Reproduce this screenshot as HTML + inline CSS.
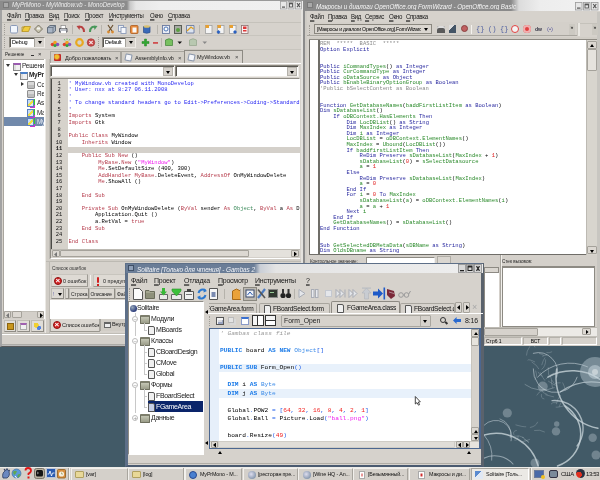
<!DOCTYPE html>
<html><head><meta charset="utf-8">
<style>
*{margin:0;padding:0;box-sizing:border-box}
html,body{width:600px;height:480px;overflow:hidden}
body{position:relative;will-change:transform;background:#425a67;font-family:"Liberation Sans",sans-serif;font-size:6px;color:#000}
.a{position:absolute}
.win{position:absolute;background:#d6d2cc}
.tt{position:absolute;font-style:italic;color:#f6f6f6;white-space:nowrap;transform:scaleY(1.2);transform-origin:0 50%}
.code{white-space:pre;font-family:"Liberation Mono",monospace;font-size:5.4px;line-height:6.6px}
.menu{position:absolute;white-space:nowrap;font-size:6px;color:#161616;letter-spacing:-0.25px}
.menu span{position:absolute;top:0;transform:scaleY(1.15);transform-origin:0 55%}
.btn3 i{position:absolute;top:0;width:7px;height:7px;background:#e4e4e4;border:1px solid #9a9a9a}
.btn3 i:nth-child(1){left:0}.btn3 i:nth-child(2){left:12px}.btn3 i:nth-child(3){left:24px}
.grip{width:2px;border-left:1px dotted #a09d96}
.sep{width:1px;background:#bdbab3;border-right:1px solid #f4f2ee}
.combo{background:#fff;border:1px solid #8a877f;border-right-color:#eeebe6;border-bottom-color:#eeebe6;box-shadow:inset 1px 1px 0 #5a5852}
.combo span{position:absolute;left:2px;top:0;line-height:9px;font-size:5.6px;letter-spacing:-0.2px}
.combo b{position:absolute;right:0;top:0;width:10px;height:9px;background:#d6d2cc;border-left:1px solid #a5a29b}
.combo b:after{content:"";position:absolute;left:2.5px;top:3px;border-left:2.5px solid transparent;border-right:2.5px solid transparent;border-top:3px solid #000}
.combo2{background:#fff;border:1px solid #8a877f;border-right-color:#eeebe6;border-bottom-color:#eeebe6;box-shadow:inset 1px 1px 0 #5a5852}
.combo2 b{position:absolute;right:1px;top:1px;width:10px;height:9px;background:#d6d2cc;border:1px solid #b5b2ab}
.combo2 b:after{content:"";position:absolute;left:2px;top:3px;border-left:2.5px solid transparent;border-right:2.5px solid transparent;border-top:3px solid #000}
.tree{width:40px;height:70px;font-size:6.4px;line-height:9px;white-space:nowrap;overflow:hidden;color:#222;letter-spacing:-0.2px}
.tree span{position:absolute}
.ex{position:absolute;width:0;height:0;border-left:2.5px solid transparent;border-right:2.5px solid transparent;border-top:3px solid #333}
.exr{position:absolute;width:0;height:0;border-top:2.5px solid transparent;border-bottom:2.5px solid transparent;border-left:3px solid #333}
.ic{position:absolute;width:8px;height:8px;background:#f0f0f0;border:1px solid #8a8a8a;border-top:2px solid;box-shadow:inset 2px 0 0 #ddd}
.fd{position:absolute;width:8px;height:8px;background:#d8d8d8;border:1px solid #909090;border-radius:1px;box-shadow:inset 0 -3px 0 #bdbdbd}
.vb{position:absolute;width:7px;height:8px;background:linear-gradient(135deg,#c8dcf4 45%,#f0e040 45%,#f0e040 65%,#dde6f4 65%);border:1px solid #5a80c0;box-shadow:2px -1px 0 -1px #3c3,2px 2px 0 -1px #c3c}
.sbtn{background:#dcd8d2;border:1px solid #a5a29b;border-radius:1px}
.tl{position:absolute;left:1px;top:1px;width:3px;height:5px;background:#777;clip-path:polygon(100% 0,0 50%,100% 100%)}
.tr{position:absolute;left:2px;top:1px;width:3px;height:5px;background:#000;clip-path:polygon(0 0,100% 50%,0 100%)}
.pbtn{background:#e0ddd7;border:1px solid #bfbcb5;border-bottom-color:#8f8c85;border-right-color:#8f8c85}
.pbtn b{position:absolute;left:2px;top:2px;width:7px;height:7px}
.tab{background:#d1cdc6;border:1px solid #a7a49d;border-bottom:0;font-size:5.6px;white-space:nowrap;overflow:hidden;letter-spacing:-0.15px}
.tab span{position:absolute;top:1px;line-height:10px;color:#222}
.tab.act{background:#d6d2cc;border-color:#8d8a83;border-bottom:0}
.ttic{position:absolute;left:3px;top:2px;width:7px;height:7px;border-radius:1px}
.cx{position:absolute;top:1px;line-height:10px;font-style:normal;font-size:6px;color:#444}
.lnum{color:#111}
.md c{color:#2828f2}
.md k{color:#b63c4c}
.md sx{color:#f020f0}
.md g{color:#3b8a5a}
.tbtn{background:#dedad4;border:1px solid #c8c5be;border-bottom-color:#9e9b94;border-right-color:#9e9b94;font-size:5px;white-space:nowrap;overflow:hidden}
.tbtn span{position:absolute;top:0;line-height:12px;color:#222}
.tbtn b{position:absolute}
.xr{position:absolute;left:4px;top:2px;width:8px;height:8px;border-radius:50%;background:#d42424;border:1px solid #901010}
.xr:after{content:"×";position:absolute;left:0.5px;top:-2.5px;font-size:8px;color:#fff;font-weight:bold}
.colh{background:#dcd8d2;border:1px solid #bdbab3;border-right-color:#8f8c85;border-bottom-color:#8f8c85;font-size:5px;white-space:nowrap;overflow:hidden}
.colh span{position:absolute;top:0;line-height:10px;color:#222}
.oo m{color:#8a8a8a}
.oo k{color:#2a2aa0}
.oo g{color:#2a8a2a}
.oo r{color:#e02020}
.gtree{font-size:7px;line-height:10px;white-space:nowrap;overflow:hidden;color:#222;letter-spacing:-0.35px}
.gtree span{position:absolute}
.gtree b{position:absolute}
.globe{width:6px;height:6px;border-radius:50%;background:radial-gradient(circle at 35% 35%,#9ab 0,#2a3a7a 70%)}
.gfd{width:10px;height:9px;background:linear-gradient(#c4c6b4,#9a9c88);border:1px solid #6f705f;border-top:2px solid #7d7e6c;border-radius:1px}
.doc{width:7px;height:9px;background:#f0f0f0;border:1px solid #555;border-radius:0 2px 0 0}
.pm{position:absolute;width:6px;height:6px;font-style:normal;font-size:6px;line-height:4px;text-align:center;color:#999;border:1px solid #bbb;border-radius:50%;background:#fff}
.vl{position:absolute;width:0;border-left:1px solid #c8c8c8}
.hl{position:absolute;width:3px;border-top:1px solid #c8c8c8}
.gtab{background:#d6d2cc;border:1px solid #a9a69f;border-bottom:0;font-size:6.6px;white-space:nowrap;overflow:hidden;border-radius:2px 2px 0 0;letter-spacing:-0.25px}
.gtab span{position:absolute;top:0;line-height:10px;color:#111}
.gtab b{position:absolute}
.gtab.act{background:#dcd8d2;border-color:#8d8a83}
.gbc m{color:#9a9a9a;font-style:italic}
.gbc k{color:#1a7ae8;font-weight:bold}
.gbc t{color:#3a8ae8}
.gbc pn{color:#1a5ae8}
.gbc r{color:#f02020}
.gbc sx{color:#f020f0}
.task{height:12px;background:#d4d0ca;border:1px solid #f2f0ec;border-right-color:#a8a59e;border-bottom:0;font-size:5.4px;white-space:nowrap;overflow:hidden;letter-spacing:-0.15px}
.task span{position:absolute;left:14px;top:0;line-height:11px;color:#111}
.task b{position:absolute}
.task.act{background:#ebe9e5;border-color:#a8a59e;border-right-color:#fff}
.tfd{left:3px;top:2px;width:9px;height:7px;background:#e8d898;border:1px solid #b0a060;border-radius:1px}
.tgl{left:4px;top:2px;width:8px;height:8px;border-radius:50%;background:radial-gradient(circle at 40% 40%,#dde,#8a9ab0 70%)}
.dn{position:absolute;border-left:2.5px solid transparent;border-right:2.5px solid transparent;border-top:3px solid #000}
</style></head><body>
<!-- ============ MonoDevelop window ============ -->
<div class="win" style="left:0;top:0;width:303px;height:347px;border-left:2px solid #a3a3a3;border-right:2px solid #e4e2de;border-bottom:1px solid #5a5a5a;box-shadow:inset 0 -1px 0 #bcbcbc,inset 0 -2px 0 #adaba6"></div>
<div class="a" style="left:0;top:0;width:303px;height:10px;background:linear-gradient(90deg,#8c8c8c 0,#8c8c8c 127px,#c8c8c8 130px,#e6e6e6 136px,#eeeeee 160px,#f0f0f0 100%);border-top:1px solid #9a9a9a"></div>
<div class="a" style="left:3px;top:2px;width:6px;height:6px;background:#a9a9a9;border:1px solid #7a7a7a"></div>
<div class="tt" style="left:12px;top:0px;font-size:5.95px;line-height:10px;color:#ececec">MyPrMono - MyWindow.vb - MonoDevelop</div>
<svg class="a" style="left:280px;top:1px" width="23" height="9" viewBox="0 0 23 9">
<g fill="#e8e8e8" stroke="#a0a0a0" stroke-width=".8"><rect x=".5" y=".5" width="6" height="7.5"/><rect x="8" y=".5" width="6" height="7.5"/><rect x="15.5" y=".5" width="6" height="7.5"/></g>
<rect x="2" y="5.5" width="3" height="1.2" fill="#555"/>
<rect x="9.5" y="2" width="3" height="4" fill="none" stroke="#555" stroke-width=".9"/><rect x="9.5" y="2" width="3" height="1.3" fill="#555"/>
<path d="M17 2.2 L20 6.2 M20 2.2 L17 6.2" stroke="#555" stroke-width="1.1"/>
</svg>
<!-- menu -->
<div class="menu" style="left:0;top:10px;height:12px;line-height:12px">
<span style="left:7px"><u>Ф</u>айл</span><span style="left:25px"><u>П</u>равка</span><span style="left:49px"><u>В</u>ид</span><span style="left:64px"><u>П</u>оиск</span><span style="left:85px"><u>П</u>роект</span><span style="left:109px"><u>И</u>нструменты</span><span style="left:150px"><u>О</u>кно</span><span style="left:168px"><u>С</u>правка</span>
</div>
<div class="a" style="left:2px;top:22px;width:299px;height:1px;background:#c5c2bb"></div>
<!-- toolbar 1 -->
<div class="a grip" style="left:4px;top:24px;height:11px"></div>
<svg class="a" style="left:0;top:23px" width="260" height="13" viewBox="0 23 260 13">
<rect x="10.5" y="25.5" width="7" height="7.5" rx="1.2" fill="#f2f6fc" stroke="#8a9ab8" stroke-width="1"/>
<path d="M22 31.5 L24 26.5 H30.5 L28.5 31.5 Z" fill="#f0cc40" stroke="#b89420" stroke-width=".8"/><path d="M22 31.5 V27 H25" fill="none" stroke="#b89420" stroke-width=".8"/>
<path d="M38.5 25 L42.5 29 L38.5 33 L34.5 29 Z" fill="#c8c4b0" stroke="#706c5c" stroke-width=".9"/><rect x="37" y="27.5" width="3" height="2" fill="#f4f4f0"/>
<path d="M47.5 27.5 L50 25.5 H55.5 V31 L53 33 H47.5 Z" fill="#a8b4c4" stroke="#5a6674" stroke-width=".9"/><path d="M47.5 27.5 H53 V33 M53 27.5 L55.5 25.5" fill="none" stroke="#5a6674" stroke-width=".7"/>
<path d="M59.5 28.5 H67 V32 H59.5 Z" fill="#bcc0c8" stroke="#50545c" stroke-width=".9"/><rect x="61" y="25.5" width="4.5" height="3" fill="#fff" stroke="#777" stroke-width=".6"/><rect x="61" y="31" width="5" height="2" fill="#fff"/>
<rect x="72" y="25" width="1" height="9" fill="#b8b5ae"/>
<path d="M84 32 C84 27 81 26 78.5 27.5" fill="none" stroke="#b84040" stroke-width="2"/><path d="M76.5 26 L80 25.5 L79.5 30 Z" fill="#b84040"/>
<path d="M90 32 C90 27 93 26 95.5 27.5" fill="none" stroke="#48985a" stroke-width="2"/><path d="M97.5 26 L94 25.5 L94.5 30 Z" fill="#48985a"/>
<rect x="101" y="25" width="1" height="9" fill="#b8b5ae"/>
<path d="M108 25 L112 31 M113 25 L109 31" stroke="#6a5030" stroke-width="1.2"/><circle cx="108.5" cy="32" r="1.4" fill="#d88a30"/><circle cx="112.5" cy="32" r="1.4" fill="#d88a30"/>
<rect x="118.5" y="25.5" width="5" height="6" fill="#eef2f8" stroke="#8a9ab8" stroke-width=".9"/><rect x="121" y="27.5" width="5" height="6" fill="#f6f8fc" stroke="#8a9ab8" stroke-width=".9"/>
<rect x="130.5" y="25.5" width="7.5" height="8" rx="1" fill="#e88a3a" stroke="#a85a20" stroke-width=".8"/><rect x="132.5" y="27.5" width="4" height="5" fill="#f8f8f8"/>
<path d="M143.5 26.5 H150 V32.5 Q146.7 34 143.5 32.5 Z" fill="#3a6ab8" stroke="#2a4a88" stroke-width=".7"/><ellipse cx="146.8" cy="26.5" rx="3.2" ry="1.3" fill="#d8c070"/>
<rect x="157" y="25" width="1" height="9" fill="#b8b5ae"/>
<rect x="162.5" y="25.5" width="7" height="8" fill="#e8ecf4" stroke="#6a7aa0" stroke-width=".9"/><circle cx="166" cy="29" r="2" fill="#fff" stroke="#3a6ab0" stroke-width=".9"/>
<rect x="174.5" y="25.5" width="7" height="8" fill="#a8aca4" stroke="#50544c" stroke-width=".9"/><circle cx="178" cy="30" r="2" fill="#5aa040"/>
<path d="M186.5 25.5 H194 V33 H186.5 Z" fill="#dce4f0" stroke="#6a7aa0" stroke-width=".9"/><path d="M187 31 L191 27 L193.5 29" fill="none" stroke="#e0a020" stroke-width="1.3"/>
<rect x="199" y="25" width="1" height="9" fill="#b8b5ae"/>
<rect x="205.5" y="25.5" width="6.5" height="8" fill="#f4f4f4" stroke="#a0a0a0" stroke-width=".8"/><rect x="205.5" y="25" width="3.5" height="3" fill="#e8a030"/>
<rect x="217.5" y="25.5" width="6.5" height="8" fill="#f4f4f4" stroke="#a0a0a0" stroke-width=".8"/><rect x="217.5" y="25" width="3.5" height="3" fill="#e8a030"/><path d="M218.5 30 L220.5 32 L218.5 34 L216.5 32 Z" fill="#2a60c0"/>
<rect x="229.5" y="25.5" width="6.5" height="8" fill="#f4f4f4" stroke="#a0a0a0" stroke-width=".8"/><rect x="229.5" y="25" width="3.5" height="3" fill="#e8a030"/><path d="M235 30 L237 32 L235 34 L233 32 Z" fill="#2a60c0"/>
<rect x="241.5" y="25.5" width="6.5" height="8" fill="#f8f0f0" stroke="#907070" stroke-width=".8"/><rect x="243" y="26.5" width="3.5" height="2.5" fill="#e03838"/><rect x="243" y="30" width="3.5" height="1.5" fill="#e03838"/>
</svg>
<div class="a" style="left:2px;top:35px;width:299px;height:1px;background:#c8c5be"></div>
<!-- toolbar 2 -->
<div class="a grip" style="left:4px;top:37px;height:11px"></div>
<div class="a combo" style="left:9px;top:37px;width:36px;height:11px"><span>Debug</span><b></b></div>
<div class="a grip" style="left:98px;top:37px;height:11px"></div>
<div class="a combo" style="left:102px;top:37px;width:34px;height:11px"><span>Default</span><b></b></div>
<svg class="a" style="left:48px;top:36px" width="162" height="13" viewBox="48 36 162 13">
<circle cx="52.5" cy="44.5" r="1.8" fill="#e04030"/><circle cx="55" cy="42.5" r="1.8" fill="#f0a020"/><circle cx="57.5" cy="44.5" r="1.8" fill="#8a50c0"/><circle cx="55" cy="45.5" r="1.6" fill="#30a040"/>
<circle cx="64.5" cy="44.5" r="1.8" fill="#e04030"/><circle cx="67" cy="42.5" r="1.8" fill="#f0a020"/><circle cx="69.5" cy="44.5" r="1.8" fill="#8a50c0"/><circle cx="67" cy="45.5" r="1.6" fill="#30a040"/><path d="M64 39 L65 40.5 M67 38.5 V40 M70 39 L69 40.5" stroke="#50b040" stroke-width=".8"/>
<circle cx="79.5" cy="42.5" r="3.3" fill="none" stroke="#e8a820" stroke-width="2.2"/>
<circle cx="91" cy="42.5" r="3.8" fill="#c84848" stroke="#a03030" stroke-width=".6"/><path d="M89.3 40.8 L92.7 44.2 M92.7 40.8 L89.3 44.2" stroke="#f4e8e8" stroke-width="1.1"/>
<path d="M142 41.5 H144.5 V39 H146.5 V41.5 H149 V43.5 H146.5 V46 H144.5 V43.5 H142 Z" fill="#30a830" stroke="#208020" stroke-width=".5"/>
<rect x="153" y="42" width="5" height="1.8" fill="#d05050"/>
<rect x="161" y="38" width="1" height="9" fill="#b8b5ae"/>
<path d="M165.5 40 Q169 37.5 172.5 40 V45.5 H165.5 Z" fill="#78c060" stroke="#4a8a40" stroke-width=".8"/>
<path d="M177.5 41.5 H182 L179.75 44 Z" fill="#111"/>
<path d="M189.5 40 Q193 37.5 196.5 40 V45.5 H189.5 Z" fill="#b8c8b0" stroke="#98a890" stroke-width=".8"/>
<path d="M202.5 41.5 H207 L204.75 44 Z" fill="#888"/>
</svg>
<div class="a" style="left:2px;top:49px;width:299px;height:1px;background:#c8c5be"></div>

<!-- Solution pad -->
<div class="a" style="left:3px;top:50px;width:41px;height:9px;font-size:4.6px;line-height:9px;padding-left:2px;color:#222">Решение</div>
<div class="a" style="left:31px;top:55px;width:3px;height:1px;background:#333"></div>
<div class="a" style="left:38px;top:50px;font-size:6px;line-height:9px;color:#333">&#xd7;</div>
<div class="a" style="left:3px;top:59px;width:42px;height:260px;background:#fff;border:1px solid #a8a59e;border-right-color:#fff"></div>
<div class="a" style="left:4px;top:116.5px;width:40px;height:9.5px;background:#7189ab"></div>
<div class="a tree" style="left:4px;top:61px">
<i class="ex" style="left:2px;top:3px"></i><b class="ic" style="left:9px;top:2px;border-top-color:#9a5ab0"></b><span style="left:18px;top:0">Решение</span>
<i class="ex" style="left:10px;top:12px"></i><b class="ic" style="left:16px;top:11px;border-top-color:#4a80c8"></b><span style="left:25px;top:9px;font-weight:bold">MyPr</span>
<i class="exr" style="left:17px;top:21px"></i><b class="fd" style="left:23px;top:20px"></b><span style="left:33px;top:19px">Ссылки</span>
<b class="fd" style="left:23px;top:29px"></b><span style="left:33px;top:28px">Resources</span>
<b class="vb" style="left:23px;top:38px"></b><span style="left:33px;top:37px">AssemblyInfo</span>
<b class="vb" style="left:23px;top:48px"></b><span style="left:33px;top:47px">Main</span>
<b class="vb" style="left:23px;top:57px"></b><span style="left:33px;top:56px;color:#e8ecf4">MyWindow</span>
</div>
<div class="a" style="left:44px;top:59px;width:1px;height:260px;background:#fff"></div>
<!-- pad h-scroll -->
<div class="a" style="left:4px;top:311px;width:40px;height:8px;background:#d3cfc9;border-top:1px solid #c0bdb6"></div>
<div class="a sbtn" style="left:4px;top:311px;width:7px;height:7px"><i class="tl"></i></div>
<div class="a sbtn" style="left:12px;top:311px;width:10px;height:7px"></div>
<div class="a sbtn" style="left:37px;top:311px;width:7px;height:7px"><i class="tr"></i></div>
<!-- pad buttons -->
<div class="a pbtn" style="left:4px;top:320px;width:12px;height:12px"><b style="background:#c8961e;border:1px solid #8a6410"></b></div>
<div class="a pbtn" style="left:17px;top:320px;width:13px;height:12px"><b style="background:#f0f0f0;border:1px solid #aaa;border-top:2px solid #a060b0"></b></div>
<div class="a pbtn" style="left:31px;top:320px;width:13px;height:12px"><b style="background:radial-gradient(circle at 30% 30%,#f0d030 35%,transparent 37%),radial-gradient(circle at 70% 70%,#5080e0 30%,transparent 32%)"></b></div>
<div class="a" style="left:45px;top:59px;width:5px;height:274px;background:#d1cdc6;border-left:1px solid #ebe9e4;border-right:1px solid #bdbab3"></div>

<!-- doc tabs -->
<div class="a tab" style="left:50px;top:51px;width:71px;height:12px"><b class="ttic" style="background:radial-gradient(circle at 40% 40%,#f0c030 30%,#c02a2a 60%)"></b><span style="left:14px">Добро пожаловать</span><i class="cx" style="left:64px">&#xd7;</i></div>
<div class="a tab" style="left:121px;top:51px;width:64px;height:12px"><b class="ttic" style="background:#f4f6fb;border:1px solid #8a96aa;transform:rotate(12deg)"></b><span style="left:13px">AssemblyInfo.vb</span><i class="cx" style="left:56px">&#xd7;</i></div>
<div class="a tab act" style="left:184px;top:50px;width:59px;height:14px"><b class="ttic" style="top:3px;background:#f4f6fb;border:1px solid #8a96aa;transform:rotate(12deg)"></b><span style="left:12px;top:1px">MyWindow.vb</span><i class="cx" style="left:50px;top:1px">&#xd7;</i></div>
<div class="a" style="left:50px;top:63px;width:251px;height:1px;background:#fff"></div>
<!-- combos -->
<div class="a combo2" style="left:50px;top:65px;width:125px;height:12px"><b></b></div>
<div class="a combo2" style="left:175px;top:65px;width:124px;height:12px"><b></b></div>
<!-- code frame -->
<div class="a" style="left:50px;top:78px;width:250px;height:181px;border:1px solid #8f8c85;border-right-color:#fff;border-bottom-color:#fff;background:#fff"></div>
<div class="a" style="left:51px;top:79px;width:17px;height:170px;background:#d6d2cb;border-left:1px solid #4a4945"></div>
<div class="a" style="left:68px;top:146.5px;width:232px;height:6.5px;background:#d4d0ca"></div>
<div class="a code lnum" style="left:52px;top:80.5px;width:14px;text-align:center">1
2
3
4
5
6
7
8
9
10
<b>11</b>
12
13
14
15
16
17
18
19
20
21
22
23
24
25</div>
<div class="a code md" style="left:68.5px;top:80.5px;width:231px;overflow:hidden;font-size:5.5px"><c>' MyWindow.vb created with MonoDevelop</c>
<c>' User: nxx at 8:27 06.11.2008</c>
<c>'</c>
<c>' To change standard headers go to Edit->Preferences->Coding->Standard Headers</c>
<c>'</c>
<k>Imports</k> System
<k>Imports</k> Gtk

<k>Public Class</k> MyWindow
    <k>Inherits</k> Window

    <k>Public Sub New</k> ()
         <k>MyBase</k>.<k>New</k> (<sx>"MyWindow"</sx>)
         <k>Me</k>.SetDefaultSize (400, 300)
         <k>AddHandler</k> <k>MyBase</k>.DeleteEvent, <k>AddressOf</k> OnMyWindowDelete
         <k>Me</k>.ShowAll ()

    <k>End Sub</k>

    <k>Private Sub</k> OnMyWindowDelete (<k>ByVal</k> sender <k>As</k> <g>Object</g>, <k>ByVal</k> a <k>As</k> DeleteEventArgs)
        Application.Quit ()
        a.RetVal = <k>true</k>
    <k>End Sub</k>

<k>End Class</k></div>
<!-- h-scroll -->
<div class="a" style="left:51px;top:249px;width:249px;height:9px;background:#d4d0ca;border-top:1px solid #bcb9b2"></div>
<div class="a sbtn" style="left:52px;top:250px;width:8px;height:7px"><i class="tl"></i></div>
<div class="a sbtn" style="left:60px;top:250px;width:189px;height:7px"></div>
<div class="a" style="left:249px;top:250px;width:42px;height:7px;background:#e4e1dc"></div>
<div class="a sbtn" style="left:291px;top:250px;width:8px;height:7px"><i class="tr" style="left:2px;top:0.5px"></i></div>

<!-- separator -->
<div class="a" style="left:46px;top:259px;width:255px;height:3px;background:#d1cdc6;border-bottom:1px solid #bdbab3"></div>
<!-- error list pad -->
<div class="a" style="left:50px;top:264px;width:251px;height:9px;font-size:4.8px;line-height:9px;padding-left:2px;color:#333">Список ошибок</div>
<div class="a tbtn" style="left:51px;top:274px;width:37px;height:13px"><b class="xr" style="left:2px"></b><span style="left:11px;font-size:5.4px">0 ошибок</span></div>
<div class="a sep" style="left:90px;top:275px;height:11px"></div>
<div class="a tbtn" style="left:93px;top:274px;width:40px;height:13px"><b style="left:3px;top:2px;width:2px;height:6px;background:#d02020;border-radius:1px"></b><b style="left:3px;top:9px;width:2px;height:2px;background:#d02020"></b><span style="left:9px;font-size:5.4px">0 предупреждений</span></div>
<div class="a" style="left:50px;top:288px;width:251px;height:12px;background:#d6d2cc"></div>
<div class="a colh" style="left:51px;top:288px;width:13px;height:11px"><span style="left:1px;color:#66a">!</span><i class="dn" style="left:6px;top:4px"></i></div>
<div class="a colh" style="left:65px;top:288px;width:4px;height:11px"></div>
<div class="a colh" style="left:69px;top:288px;width:20px;height:11px"><span style="left:1px">Строка</span></div>
<div class="a colh" style="left:89px;top:288px;width:26px;height:11px"><span style="left:0.5px;letter-spacing:-0.2px">Описание</span></div>
<div class="a colh" style="left:115px;top:288px;width:40px;height:11px"><span style="left:1px">Файл</span></div>
<div class="a" style="left:50px;top:300px;width:251px;height:19px;background:#fff"></div>
<!-- bottom tabs -->
<div class="a tab" style="left:50px;top:319px;width:50px;height:13px;border-top:0;border-bottom:1px solid #9a978f;background:#dcd8d2"><b class="xr" style="left:2px;top:2px"></b><span style="left:11px;top:1px">Список ошибок</span></div>
<div class="a tab" style="left:100px;top:319px;width:50px;height:12px;border-top:0"><b style="left:3px;top:3px;width:7px;height:6px;border:1px solid #666;border-top:2px solid #666;background:#eee;position:absolute"></b><span style="left:11px;top:0px">Внутренний</span></div>
<!-- status bar -->
<div class="a" style="left:2px;top:333px;width:299px;height:1px;background:#c0bdb6"></div>
<div class="a" style="left:2px;top:334px;width:299px;height:10px;background:#d4d0ca;border-top:1px solid #fff"></div>
<!-- ============ OpenOffice window ============ -->
<div class="win" style="left:303px;top:0;width:297px;height:346px;border-left:2px solid #8c8c8c;border-bottom:2px solid #8e8e8e"></div>
<div class="a" style="left:305px;top:0;width:2px;height:346px;background:#cfccc6"></div>
<div class="a" style="left:305px;top:0;width:295px;height:11px;background:linear-gradient(90deg,#8a8a8a 0,#8a8a8a 206px,#dcdcdc 214px,#ededed 235px,#f2f2f2 100%)"></div>
<div class="a" style="left:307px;top:2px;width:6px;height:6px;background:#a9a9a9;border:1px solid #7a7a7a"></div>
<div class="tt" style="left:316px;top:0px;font-size:6.2px;line-height:11px">Макросы и диалоги OpenOffice.org FormWizard - OpenOffice.org Basic</div>
<svg class="a" style="left:575px;top:2px" width="24" height="9" viewBox="0 0 24 9">
<g fill="#e6e6e6" stroke="#9a9a9a" stroke-width=".8"><rect x=".5" y=".5" width="6.5" height="7.5"/><rect x="8.5" y=".5" width="6.5" height="7.5"/><rect x="16.5" y=".5" width="6.5" height="7.5"/></g>
<rect x="2" y="5.5" width="3.5" height="1.2" fill="#555"/>
<rect x="10" y="2" width="3.5" height="4" fill="none" stroke="#555" stroke-width=".9"/><rect x="10" y="2" width="3.5" height="1.3" fill="#555"/>
<path d="M18.2 2 L21.3 6.2 M21.3 2 L18.2 6.2" stroke="#555" stroke-width="1.1"/>
</svg>
<div class="a" style="left:597px;top:12px;width:3px;height:334px;background:#c8c6c1"></div>
<!-- menu -->
<div class="menu" style="left:303px;top:10.5px;height:11px;line-height:11px;font-size:6.1px;letter-spacing:-0.3px">
<span style="left:7px"><u>Ф</u>айл</span><span style="left:25px"><u>П</u>равка</span><span style="left:48px"><u>В</u>ид</span><span style="left:62px"><u>С</u>ервис</span><span style="left:86px"><u>О</u>кно</span><span style="left:103px"><u>С</u>правка</span>
</div>
<div class="a" style="left:307px;top:23px;width:290px;height:1px;background:#c5c2bb"></div>
<!-- toolbar -->
<div class="a" style="left:307px;top:22px;width:270px;height:14px;background:#d4d0ca;border-bottom:1px solid #a9a69f"></div>
<div class="a grip" style="left:309px;top:25px;height:10px"></div>
<div class="a combo" style="left:314px;top:24px;width:118px;height:10px;box-shadow:none;border-color:#8a877f;background:#dad6d0"><span style="line-height:8px;font-size:5.2px;letter-spacing:-0.25px">[Макросы и диалоги OpenOffice.org].FormWizard</span><b style="height:8px;background:#dad6d0;border-left:0"></b></div>
<div class="a" style="left:437px;top:25.5px;width:8px;height:7px;background:#5a5a5a;border-radius:2px 2px 0 0;box-shadow:inset 0 2px 0 #ddd"></div>
<div class="a" style="left:449px;top:24.5px;width:7px;height:8px;background:linear-gradient(135deg,#ddd 40%,#456 40%)"></div>
<div class="a" style="left:461px;top:25px;width:7px;height:7px;border-radius:50%;background:#c06060;border:1.5px solid #8a4040"></div>
<div class="a sep" style="left:471px;top:24.5px;height:9px"></div>
<div class="a" style="left:476px;top:24.5px;font-size:7px;line-height:9px;color:#5060a0;font-family:'Liberation Mono'">{}</div>
<div class="a" style="left:488px;top:24.5px;font-size:7px;line-height:9px;color:#5060a0;font-family:'Liberation Mono'">()</div>
<div class="a" style="left:500px;top:24.5px;font-size:7px;line-height:9px;color:#5060a0;font-family:'Liberation Mono'">{}</div>
<div class="a" style="left:511px;top:24.5px;width:8px;height:8px;border-radius:50%;border:1.5px solid #e04040;background:#f4f4f4"></div>
<div class="a" style="left:523px;top:24.5px;width:8px;height:8px;border-radius:50%;background:#e04040;box-shadow:inset 0 0 0 2px #f0b0b0"></div>
<div class="a" style="left:535px;top:25.5px;font-size:5px;line-height:7px;color:#334;font-weight:bold">dw</div>
<div class="a" style="left:547px;top:24.5px;font-size:6px;line-height:9px;color:#6060a0">(•)</div>
<div class="a" style="left:569px;top:23.5px;width:6px;height:11px;background:#ccc9c2;font-size:5px;line-height:6px;text-align:center">»</div>
<div class="a" style="left:577px;top:22.5px;width:3px;height:13px;background:#eae8e3;border-left:1px solid #c9c6bf"></div>
<div class="a" style="left:592px;top:23.5px;width:6px;height:11px;background:#ccc9c2;font-size:5px;line-height:6px;text-align:center">»</div>
<!-- code area -->
<div class="a" style="left:309px;top:37px;width:288px;height:218px;background:#fff;border:1px solid #6f6d68;border-top:1px solid #6f6d68"></div>
<div class="a" style="left:309px;top:37px;width:288px;height:3px;background:#d1cdc6;border-bottom:1px solid #8d8a83"></div>
<div class="a" style="left:318px;top:40px;width:1.5px;height:215px;background:#6f6d68"></div>
<div class="a code oo" style="left:320px;top:40px;width:266px;height:215px;overflow:hidden;line-height:5.59px;font-size:5.5px;padding-top:1.3px"><m>REM  *****  BASIC  *****</m>
<k>Option Explicit</k>


<k>Public</k> <g>iCommandTypes</g>() <k>as Integer</k>
<k>Public</k> <g>CurCommandType</g> <k>as Integer</k>
<k>Public</k> <g>oDataSource</g> <k>as Object</k>
<k>Public</k> <g>bEnableBinaryOptionGroup</g> <k>as Boolean</k>
<m>'Public bSelectContent as Boolean</m>


<k>Function</k> <g>GetDatabaseNames</g>(<g>baddFirstListItem</g> <k>as Boolean</k>)
<k>Dim</k> <g>sDatabaseList</g>()
    <k>If</k> <g>oDBContext.HasElements</g> <k>Then</k>
        <k>Dim</k> <g>LocDBList</g>() <k>as String</k>
        <k>Dim</k> <g>MaxIndex</g> <k>as Integer</k>
        <k>Dim</k> <g>i</g> <k>as Integer</k>
        <g>LocDBList</g> = <g>oDBContext.ElementNames</g>()
        <g>MaxIndex</g> = <g>Ubound</g>(<g>LocDBList</g>())
        <k>If</k> <g>baddfirstListItem</g> <k>Then</k>
            <k>ReDim Preserve</k> <g>sDatabaseList</g>(<g>MaxIndex</g> + <r>1</r>)
            <g>sDatabaseList</g>(<r>0</r>) = <g>sSelectDatasource</g>
            <g>a</g> = <r>1</r>
        <k>Else</k>
            <k>ReDim Preserve</k> <g>sDatabaseList</g>(<g>MaxIndex</g>)
            <g>a</g> = <r>0</r>
        <k>End If</k>
        <k>For</k> <g>i</g> = <r>0</r> <k>To</k> <g>MaxIndex</g>
            <g>sDatabaseList</g>(<g>a</g>) = <g>oDBContext.ElementNames</g>(<g>i</g>)
            <g>a</g> = <g>a</g> + <r>1</r>
        <k>Next</k> <g>i</g>
    <k>End If</k>
    <g>GetDatabaseNames</g>() = <g>sDatabaseList</g>()
<k>End Function</k>


<k>Sub</k> <g>GetSelectedDBMetaData</g>(<g>sDBName</g> <k>as String</k>)
<k>Dim</k> <g>OldsDBname</g> <k>as String</k></div>
<!-- v-scroll -->
<div class="a" style="left:586px;top:40px;width:11px;height:215px;background:#d8d5ce;border-left:1px solid #bdbab3"></div>
<div class="a sbtn" style="left:587px;top:41px;width:10px;height:8px"><i class="dn" style="left:2px;top:2px;border-top:0;border-bottom:3px solid #000"></i></div>
<div class="a sbtn" style="left:587px;top:49px;width:10px;height:22px;background:#e6e3dd"></div>
<div class="a sbtn" style="left:587px;top:246px;width:10px;height:8px"><i class="dn" style="left:2px;top:2.5px"></i></div>
<!-- lower panel -->
<div class="a" style="left:307px;top:255px;width:290px;height:91px;background:#d4d0ca"></div>
<div class="a" style="left:310px;top:258px;font-size:4.6px;line-height:7px;color:#333;white-space:nowrap;letter-spacing:-0.1px">Контрольное значение:</div>
<div class="a" style="left:366px;top:257px;width:69px;height:7px;background:#fff;border:1px solid #8d8a83;border-right-color:#f0f0f0;border-bottom:0"></div>
<div class="a" style="left:437px;top:256px;width:14px;height:8px;background:#dad6d0;border:1px solid #b0ada6;border-bottom:0"></div>
<div class="a" style="left:500px;top:255px;width:2px;height:81px;background:#a9a69f;border-right:1px solid #f2f0ec"></div>
<div class="a" style="left:502px;top:258px;font-size:4.6px;line-height:7px;color:#222;white-space:nowrap">Стек вызовов:</div>
<div class="a" style="left:502px;top:266px;width:93px;height:61px;background:#fff;border:1px solid #8d8a83;border-top:2px solid #8d8a83"></div>
<div class="a" style="left:484px;top:267px;width:15px;height:6px;background:#dad6d0;border:1px solid #8d8a83"></div>
<div class="a" style="left:484px;top:273px;width:15px;height:54px;background:#fff;border-left:1px solid #8d8a83"></div>
<!-- hscroll -->
<div class="a" style="left:484px;top:327px;width:113px;height:9px;background:#eceae6;border-top:1px solid #bdbab3"></div>
<div class="a sbtn" style="left:484px;top:328px;width:54px;height:8px;background:#d6d2cc"></div>
<div class="a sbtn" style="left:582px;top:328px;width:9px;height:7px"><i class="tr" style="left:2.5px;top:0.5px"></i></div>
<!-- status bar -->
<div class="a" style="left:307px;top:336px;width:290px;height:9px;background:#d6d2cc;border-top:1px solid #c3c0b9"></div>
<div class="a" style="left:484px;top:337px;width:38px;height:8px;border:1px solid #b5b2ab;border-right-color:#fff;border-bottom-color:#fff;font-size:5px;line-height:6px;padding-left:1px;white-space:nowrap;overflow:hidden">Стр6 1</div>
<div class="a" style="left:523px;top:337px;width:25px;height:8px;border:1px solid #b5b2ab;border-right-color:#fff;border-bottom-color:#fff;font-size:5px;line-height:6px;text-align:center">ВСТ</div>
<div class="a" style="left:549px;top:337px;width:12px;height:8px;border:1px solid #b5b2ab;border-right-color:#fff;border-bottom-color:#fff"></div>
<div class="a" style="left:562px;top:337px;width:35px;height:8px;border:1px solid #b5b2ab;border-right-color:#fff;border-bottom-color:#fff"></div>
<!-- ============ Gambas window ============ -->
<div class="win" style="left:125px;top:263px;width:359px;height:204px;border:3px solid #5d6f88;border-top:1px solid #5d6f88;border-bottom:2px solid #4a5a70;border-right-color:#5a626c"></div>
<div class="a" style="left:126px;top:264px;width:357px;height:9px;background:linear-gradient(90deg,#6a7d97 0,#6a7d97 128px,#c9ced6 134px,#e4e4e4 150px,#eeeeee 100%)"></div>
<div class="a" style="left:128px;top:265px;width:6px;height:6px;background:#8fa0b8;border:1px solid #3f4f66"></div>
<div class="tt" style="left:137px;top:263.5px;font-size:6.45px;line-height:9px;color:#f2f4f8;letter-spacing:-0.1px">Solitaire [Только для чтения] - Gambas 2</div>
<svg class="a" style="left:458px;top:264px" width="25" height="9" viewBox="0 0 25 9">
<g fill="#d8d8d8" stroke="#8a8a8a" stroke-width=".8"><rect x=".5" y=".5" width="7" height="8"/><rect x="8.5" y=".5" width="7" height="8"/><rect x="16.5" y=".5" width="7" height="8"/></g>
<rect x="2" y="6" width="4" height="1.3" fill="#222"/>
<rect x="10" y="2" width="4" height="4.5" fill="none" stroke="#222" stroke-width="1"/><rect x="10" y="2" width="4" height="1.5" fill="#222"/>
<path d="M18.5 2.2 L21.5 6.8 M21.5 2.2 L18.5 6.8" stroke="#222" stroke-width="1.2"/>
</svg>
<!-- menu -->
<div class="menu" style="left:128px;top:275px;height:11px;line-height:11px;font-size:7px;letter-spacing:-0.25px">
<span style="left:3px"><u>Ф</u>айл</span><span style="left:26px"><u>П</u>роект</span><span style="left:56px"><u>О</u>тладка</span><span style="left:90px"><u>П</u>росмотр</span><span style="left:127px"><u>И</u>нструменты</span><span style="left:178px"><u>?</u></span>
</div>
<!-- toolbar -->
<div class="a grip" style="left:129px;top:288px;height:12px"></div>
<svg class="a" style="left:128px;top:286px" width="168" height="15" viewBox="128 286 168 15">
<path d="M133.5 288.5 H139.5 L142.5 291.5 V299.5 H133.5 Z" fill="#fbfbfb" stroke="#555" stroke-width="1"/>
<path d="M145.5 290.5 H149 L150 291.5 H154.5 V298.5 H145.5 Z" fill="#a4a690" stroke="#6a6c5a" stroke-width="1"/><rect x="146" y="293" width="8" height="5" fill="#8e907a"/>
<path d="M159.5 294.5 H167.5 V299.5 H159.5 Z" fill="#eaeaea" stroke="#666" stroke-width="1"/><path d="M162 288 H165 V291.5 H167 L163.5 295.5 L160 291.5 H162 Z" fill="#38b838"/>
<path d="M171.5 294.5 H181.5 V299.5 H171.5 Z" fill="#eaeaea" stroke="#666" stroke-width="1"/><path d="M172 289 H181 V291 L176.5 296 L172 291 Z" fill="#3cc03c" stroke="#2a902a" stroke-width=".6"/>
<path d="M184.5 291.5 H193.5 V299.5 H184.5 Z" fill="#f0f0f0" stroke="#555" stroke-width="1"/><path d="M187 289 H191 V292 H187 Z" fill="#444"/><rect x="186" y="294" width="6" height="1" fill="#777"/>
<path d="M198.5 293 A4.3 4.3 0 0 1 205.5 290.5" fill="none" stroke="#2a78d0" stroke-width="2"/><path d="M205.5 295 A4.3 4.3 0 0 1 198.5 297.5" fill="none" stroke="#2a78d0" stroke-width="2"/>
<path d="M204 288.5 L207 291 L203.5 292.5 Z M200 299.5 L197 297 L200.5 295.5 Z" fill="#2a78d0"/>
<path d="M209.5 288.5 H217.5 V299.5 H209.5 Z" fill="#f6f6f6" stroke="#555" stroke-width="1"/><rect x="211.5" y="292" width="4" height="5" fill="#7a8ab0"/>
<rect x="224" y="289" width="1" height="10" fill="#b5b2ab"/>
<path d="M232.5 291 L236.5 289 L240.5 291 V299.5 H232.5 Z" fill="#eaa23a" stroke="#a86a18" stroke-width="1"/>
<rect x="240" y="289" width="1" height="10" fill="#b5b2ab"/>
<rect x="243.5" y="287.5" width="13" height="13" fill="#bcb9b2" stroke="#8a877f" stroke-width="1"/>
<rect x="246" y="290" width="8" height="7" fill="#eef2f8" stroke="#3a4a6a" stroke-width="1"/><path d="M247.5 295 L250 292 L252.5 295" fill="none" stroke="#2a5ab0" stroke-width="1"/>
<path d="M258 298 L265 289" stroke="#4a7ac0" stroke-width="2.2"/><path d="M258 289.5 L265 298" stroke="#555" stroke-width="1.6"/>
<rect x="268.5" y="289.5" width="9" height="8" fill="#303830" stroke="#888" stroke-width="1"/><rect x="270" y="292" width="4" height="1" fill="#9c9"/>
<circle cx="283" cy="295.5" r="2.6" fill="#222"/><circle cx="288.5" cy="295.5" r="2.6" fill="#222"/><rect x="282" y="289" width="2" height="4" fill="#333"/><rect x="287.5" y="289" width="2" height="4" fill="#333"/>
<rect x="294" y="289" width="1" height="10" fill="#b5b2ab"/>
</svg>
<svg class="a" style="left:296px;top:286px" width="116" height="15" viewBox="296 286 116 15">
<g fill="none" stroke="#a9adb6" stroke-width="1">
<path d="M299 289.5 L305 293.5 L299 297.5 Z" fill="#e4e6ea"/>
<rect x="311.5" y="289.5" width="2.5" height="8" fill="#e8eaee"/><rect x="315.5" y="289.5" width="2.5" height="8" fill="#e8eaee"/>
<rect x="325.5" y="290.5" width="6" height="6" fill="#e4e6ea" stroke="#c4c8d0"/>
<path d="M336 289.5 L340 293.5 L336 297.5 Z M340 289.5 L344 293.5 L340 297.5 Z" fill="#e4e6ea"/><path d="M345 289.5 V297.5"/>
<path d="M349 289.5 L353 293.5 L349 297.5 Z M353 289.5 L357 293.5 L353 297.5 Z" fill="#e4e6ea"/>
</g>
<path d="M366.5 288 L371 293 H368.5 V299 H364.5 V293 H362 Z" fill="#c8ccd2" stroke="#b0b4ba" stroke-width=".6"/>
<rect x="362" y="287.5" width="9" height="1.2" fill="#b8bcc2"/>
<path d="M373 291.5 H378 V288.5 L383 293.5 L378 298.5 V295.5 H373 Z" fill="#1e5ac8"/>
<rect x="383.5" y="287.5" width="1.6" height="12" fill="#1e5ac8"/>
<path d="M387 289 L394 291 L395 296 L391 299 L387 295 Z" fill="#7a2838"/><path d="M389 292 L394 293.5" stroke="#c0a0a8" stroke-width=".8"/>
<g fill="none" stroke="#9a9a9a" stroke-width="1"><circle cx="401" cy="295" r="2.3"/><circle cx="406.5" cy="295" r="2.3"/><path d="M403.3 295 H404.2 M408.8 294 L410.5 291"/></g>
</svg>
<!-- tree panel -->
<div class="a" style="left:128px;top:301px;width:76px;height:154px;background:#fff;border:1px solid #8f8c85;border-right-color:#fff;border-bottom-color:#fff"></div>
<div class="a gtree" style="left:129px;top:303px;width:74px;height:152px">
<b class="globe" style="left:1px;top:2px;width:7px;height:7px"></b><span style="left:8px;top:0">Solitaire</span>
<i class="pm" style="left:3px;top:13px">−</i><b class="gfd" style="left:11px;top:12px"></b><span style="left:22px;top:11px">Модули</span>
<b class="doc" style="left:19px;top:23px"></b><span style="left:27px;top:22px">MBoards</span>
<i class="pm" style="left:3px;top:35px">−</i><b class="gfd" style="left:11px;top:34px"></b><span style="left:22px;top:33px">Классы</span>
<b class="doc" style="left:19px;top:45px"></b><span style="left:27px;top:44px">CBoardDesign</span>
<b class="doc" style="left:19px;top:56px"></b><span style="left:27px;top:55px">CMove</span>
<b class="doc" style="left:19px;top:67px"></b><span style="left:27px;top:66px">Global</span>
<i class="pm" style="left:3px;top:79px">−</i><b class="gfd" style="left:11px;top:78px"></b><span style="left:22px;top:77px">Формы</span>
<b class="doc" style="left:19px;top:89px"></b><span style="left:27px;top:88px">FBoardSelect</span>
<div class="a" style="left:19px;top:98px;width:55px;height:11px;background:#0a246a"></div>
<b class="doc" style="left:19px;top:100px;background:#c8d0e8"></b><span style="left:27px;top:99px;color:#fff">FGameArea</span>
<i class="pm" style="left:3px;top:112px">+</i><b class="gfd" style="left:11px;top:111px"></b><span style="left:22px;top:110px">Данные</span>
<i class="vl" style="left:6px;top:10px;height:4px"></i><i class="vl" style="left:6px;top:19px;height:14px"></i><i class="vl" style="left:6px;top:41px;height:36px"></i><i class="vl" style="left:6px;top:85px;height:25px"></i>
<i class="vl" style="left:15px;top:20px;height:7px"></i><i class="hl" style="left:15px;top:27px"></i>
<i class="vl" style="left:15px;top:42px;height:29px"></i><i class="hl" style="left:15px;top:49px"></i><i class="hl" style="left:15px;top:60px"></i><i class="hl" style="left:15px;top:71px"></i>
<i class="vl" style="left:15px;top:86px;height:18px"></i><i class="hl" style="left:15px;top:93px"></i><i class="hl" style="left:15px;top:104px"></i>
</div>
<div class="a" style="left:204px;top:301px;width:5px;height:152px;background:#d6d2cc"></div>
<div class="a" style="left:205px;top:441px;border-top:2.5px solid transparent;border-bottom:2.5px solid transparent;border-right:3px solid #000"></div>
<div class="a" style="left:205px;top:310px;border-top:2.5px solid transparent;border-bottom:2.5px solid transparent;border-right:3px solid #000"></div>

<!-- editor tabs -->
<div class="a gtab" style="left:209px;top:303px;width:48px;height:10px;border-left:0;border-radius:0 2px 0 0"><span style="left:-3px">FGameArea.form</span></div>
<div class="a gtab" style="left:259px;top:303px;width:71px;height:10px"><b class="doc" style="left:4px;top:1px"></b><span style="left:13px">FBoardSelect.form</span></div>
<div class="a gtab act" style="left:331px;top:301px;width:69px;height:12px"><b class="doc" style="left:5px;top:2px"></b><span style="left:15px;top:1px">FGameArea.class</span></div>
<div class="a gtab" style="left:400px;top:303px;width:55px;height:10px"><b class="doc" style="left:4px;top:1px"></b><span style="left:13px">FBoardSelect.class</span></div>
<div class="a sbtn" style="left:455px;top:302px;width:7px;height:11px"><i class="tl" style="left:1px;top:2px;background:#000"></i></div>
<div class="a sbtn" style="left:463px;top:302px;width:7px;height:11px"><i class="tr" style="left:2px;top:2px"></i></div>
<div class="a" style="left:472px;top:301px;font-size:9px;line-height:12px;color:#a8a8a8">&#xd7;</div>
<div class="a" style="left:208px;top:313px;width:275px;height:1px;background:#fff"></div>
<!-- editor toolbar -->
<div class="a grip" style="left:209px;top:316px;height:10px"></div>
<div class="a" style="left:216px;top:317px;width:8px;height:8px;background:#d8dae0;border:1px solid #555;box-shadow:inset 1px 2px 0 #f4f4f4,inset -1px -2px 0 #9aa4c0"></div>
<div class="a" style="left:228px;top:317px;width:6px;height:6px;background:#e4e4e4;border:1px solid #bbb;box-shadow:2px 2px 0 #d8d8d8"></div>
<div class="a" style="left:241px;top:317px;width:8px;height:8px;background:#fff;border:1px solid #8a9ac8;border-top:2px solid #3a70d0"></div>
<div class="a" style="left:252px;top:315px;width:12px;height:11px;background:#f4f4f4;border:1.5px solid #333;box-shadow:inset -5px 0 0 #fff, inset -6px 0 0 #333"></div>
<div class="a" style="left:265px;top:315px;width:11px;height:11px;background:#f4f4f4;border:1.5px solid #333;box-shadow:inset 0 -4px 0 #fff, inset 0 -5px 0 #333"></div>
<div class="a" style="left:281px;top:315px;width:150px;height:12px;background:#d6d2cc;border:1px solid #a9a69f;border-radius:1px"></div>
<div class="a" style="left:284px;top:315px;font-size:6.8px;line-height:12px;color:#222;white-space:nowrap">Form_Open</div>
<div class="a" style="left:420px;top:316px;width:1px;height:10px;background:#b0ada6"></div>
<i class="dn" style="left:423px;top:320px"></i>
<div class="a" style="left:440px;top:317px;width:6px;height:6px;border-radius:50%;border:1.5px solid #333"></div>
<div class="a" style="left:445px;top:322px;width:3px;height:1.5px;background:#333;transform:rotate(45deg)"></div>
<div class="a" style="left:453px;top:317px;width:8px;height:7px;background:#2a6ad0;clip-path:polygon(0 50%,45% 0,45% 30%,100% 30%,100% 70%,45% 70%,45% 100%)"></div>
<div class="a" style="left:465px;top:315px;font-size:7px;line-height:12px;color:#222;white-space:nowrap;letter-spacing:-0.2px">8:16</div>
<!-- code -->
<div class="a" style="left:209px;top:328px;width:272px;height:121px;background:#fff;border:1px solid #4c6790;border-width:1px 2px 2px 1px"></div>
<div class="a" style="left:210px;top:329px;width:9px;height:112px;background:#e6effa"></div>
<div class="a" style="left:219px;top:363.5px;width:252px;height:8.5px;background:#e8f1fb"></div>
<div class="a" style="left:219px;top:389px;width:252px;height:8.5px;background:#e8f1fb"></div>
<div class="a code gbc" style="left:220px;top:329px;width:251px;height:112px;overflow:hidden;font-size:6.2px;line-height:8.5px;padding-top:1px"><m>' Gambas class file</m>

<k>PUBLIC</k> board <k>AS</k> <k>NEW</k> <t>Object</t><pn>[]</pn>

<k>PUBLIC SUB</k> Form_Open<pn>()</pn>

  <k>DIM</k> i <k>AS</k> <t>Byte</t>
  <k>DIM</k> j <k>AS</k> <t>Byte</t>

  Global<pn>.</pn>POW2 <pn>=</pn> <pn>[</pn><r>64</r><pn>,</pn> <r>32</r><pn>,</pn> <r>16</r><pn>,</pn> <r>8</r><pn>,</pn> <r>4</r><pn>,</pn> <r>2</r><pn>,</pn> <r>1</r><pn>]</pn>
  Global<pn>.</pn>Ball <pn>=</pn> Picture<pn>.</pn>Load<pn>(</pn><sx>"ball.png"</sx><pn>)</pn>

  board<pn>.</pn>Resize<pn>(</pn><r>49</r><pn>)</pn></div>
<!-- v scroll -->
<div class="a" style="left:471px;top:329px;width:8px;height:112px;background:#d6d2cc;border-left:1px solid #c8c5be"></div>
<div class="a sbtn" style="left:471px;top:329px;width:8px;height:8px"><i class="dn" style="left:1.5px;top:2px;border-top:0;border-bottom:3px solid #000"></i></div>
<div class="a sbtn" style="left:471px;top:337px;width:8px;height:9px;background:#e6e3dd"></div>
<div class="a sbtn" style="left:471px;top:427px;width:8px;height:7px"><i class="dn" style="left:1.5px;top:2px;border-top:0;border-bottom:3px solid #000"></i></div>
<div class="a sbtn" style="left:471px;top:434px;width:8px;height:7px"><i class="dn" style="left:1.5px;top:2px"></i></div>
<!-- h scroll -->
<div class="a" style="left:210px;top:441px;width:269px;height:7px;background:#e6e3de;border-top:1px solid #c8c5be"></div>
<div class="a sbtn" style="left:211px;top:441px;width:7px;height:7px"><i class="tl" style="left:1px;top:0.5px;background:#000"></i></div>
<div class="a sbtn" style="left:218px;top:441px;width:237px;height:7px;background:#e0ddd8;border-color:#cfccc6"></div>
<div class="a sbtn" style="left:456px;top:441px;width:7px;height:7px"><i class="tl" style="left:1px;top:0.5px;background:#000"></i></div>
<div class="a sbtn" style="left:463px;top:441px;width:7px;height:7px"><i class="tr" style="left:2px;top:0.5px"></i></div>
<div class="a" style="left:218px;top:451px;border-left:2.5px solid transparent;border-right:2.5px solid transparent;border-bottom:3px solid #000"></div>
<div class="a" style="left:467px;top:451px;border-left:2.5px solid transparent;border-right:2.5px solid transparent;border-bottom:3px solid #000"></div>
<div class="a" style="left:128px;top:463px;width:353px;height:1px;background:#b0ada6"></div>
<svg class="a" style="left:413px;top:395px" width="10" height="12" viewBox="413 395 10 12">
<path d="M415.3 396.5 V404 L417 402.6 L418.5 405.2 L419.6 404.6 L418.3 402.1 L420.3 401.8 Z" fill="#fff" stroke="#333" stroke-width=".9" stroke-linejoin="round"/>
</svg>
<!-- ============ desktop decoration ============ -->
<svg class="a" style="left:484px;top:346px" width="116" height="121" viewBox="484 346 116 121">
<defs><radialGradient id="gl"><stop offset="0" stop-color="#fff" stop-opacity=".75"/><stop offset=".35" stop-color="#fff" stop-opacity=".45"/><stop offset="1" stop-color="#fff" stop-opacity=".2"/></radialGradient></defs>
<g fill="none" stroke="#c8d4da" stroke-linecap="round">
<path d="M556.7 368.9A52.3 52.3 0 0 0 597.9 428.3" stroke-width="1.5" stroke-opacity="0.8"/>
<path d="M552.1 400.6A28.2 28.2 0 0 1 577.1 446.0" stroke-width="1.4" stroke-opacity="0.75"/>
<path d="M547.9 377.2A49.7 49.7 0 0 1 600.0 379.3" stroke-width="1.5" stroke-opacity="0.8"/>
<path d="M537.5 377.2A43.9 43.9 0 0 1 587.5 366.8" stroke-width="1.0" stroke-opacity="0.6"/>
<path d="M533.3 353.3A19.2 19.2 0 0 1 556.7 377.2" stroke-width="1.0" stroke-opacity="0.6"/>
<path d="M533.3 368.9A22.5 22.5 0 0 0 577.1 377.2" stroke-width="1.0" stroke-opacity="0.6"/>
<path d="M560.4 391.8A54.8 54.8 0 0 1 600.0 382.5" stroke-width="1.2" stroke-opacity="0.7"/>
<path d="M525.0 384.5A29.4 29.4 0 0 0 554.2 387.7" stroke-width="0.8" stroke-opacity="0.45"/>
<path d="M500.0 418.9A15.5 15.5 0 0 1 510.4 437.7" stroke-width="0.9" stroke-opacity="0.55"/>
<path d="M565.2 406.0A33.4 33.4 0 0 1 557.5 466.0" stroke-width="1.5" stroke-opacity="0.8"/>
<path d="M484.0 435.0A43.7 43.7 0 0 1 538.2 466.0" stroke-width="1.5" stroke-opacity="0.8"/>
<path d="M484.0 425.3A16.1 16.1 0 0 1 511.1 440.8" stroke-width="1.0" stroke-opacity="0.55"/>
<path d="M484.0 458.2A24.7 24.7 0 0 1 513.0 464.0" stroke-width="1.1" stroke-opacity="0.6"/>
<path d="M484.0 435.0A32.5 32.5 0 0 1 491.7 460.2" stroke-width="1.0" stroke-opacity="0.55"/>
</g>
<g fill="none" stroke="#b8c6cc" stroke-width=".6" stroke-opacity=".5"><path d="M535.1 347.4Q533.7 344.4 531.9 343.0"/><path d="M527.6 360.3Q528.7 358.7 535.0 362.0"/><path d="M537.9 371.8Q540.9 376.7 542.4 376.2"/><path d="M542.2 356.3Q546.9 354.6 547.4 355.5"/><path d="M530.0 346.2Q526.3 351.3 526.5 355.5"/><path d="M543.9 355.4Q538.7 352.8 538.8 353.8"/><path d="M545.1 357.4Q543.1 360.1 541.7 365.2"/><path d="M548.2 367.2Q548.6 373.6 548.6 375.6"/><path d="M546.4 352.4Q548.8 353.6 552.1 351.7"/><path d="M545.3 394.7Q551.2 396.3 554.0 396.9"/><path d="M565.5 390.5Q564.5 386.2 562.6 382.5"/><path d="M564.5 405.7Q557.5 407.6 555.7 407.1"/><path d="M559.1 406.8Q559.9 404.8 562.0 400.8"/><path d="M541.6 394.1Q540.4 398.2 544.4 399.0"/><path d="M544.6 388.9Q538.1 391.9 536.7 395.4"/><path d="M556.4 404.2Q557.2 399.1 560.7 395.0"/><path d="M551.0 404.2Q552.0 401.8 556.7 402.7"/><path d="M547.5 394.6Q541.8 392.4 542.0 391.1"/><path d="M521.3 441.9Q525.8 441.2 530.1 439.2"/><path d="M529.9 427.5Q536.1 426.4 537.7 421.8"/><path d="M522.0 437.2Q522.9 437.2 529.0 442.5"/><path d="M516.8 430.5Q512.4 430.7 514.0 435.0"/><path d="M513.8 436.2Q519.6 434.9 524.0 437.8"/><path d="M518.1 435.7Q518.3 440.8 514.3 440.1"/><path d="M524.0 439.5Q525.5 439.6 528.9 442.4"/><path d="M534.2 430.5Q539.7 429.2 544.8 432.1"/><path d="M526.2 426.8Q523.0 427.0 515.5 424.8"/><path d="M540.2 372.3Q542.8 378.2 545.0 380.7"/><path d="M541.6 369.5Q545.8 366.2 545.7 359.4"/><path d="M551.4 379.8Q551.1 381.0 552.5 387.8"/><path d="M535.6 370.6Q538.0 374.8 535.0 379.7"/><path d="M553.7 384.8Q555.5 382.1 560.6 382.8"/><path d="M538.9 369.1Q537.3 365.3 531.5 361.8"/><path d="M548.1 381.0Q554.4 385.0 555.8 385.5"/><path d="M550.0 374.6Q551.1 380.8 554.2 383.3"/><path d="M554.4 372.9Q551.4 374.0 545.7 379.1"/></g>
<circle cx="595" cy="372" r="15" fill="#b8c8d0" fill-opacity=".45"/>
<circle cx="595" cy="372" r="7" fill="#d8e4ea" fill-opacity=".45"/>
<circle cx="595" cy="372" r="3" fill="#fff" fill-opacity=".4"/>
<g fill="#c8d4da" fill-opacity=".35">
<circle cx="542.7" cy="386.6" r="5"/>
<circle cx="507.3" cy="413" r="4.6"/>
<circle cx="556.7" cy="424" r="2.7"/>
<circle cx="556" cy="431.4" r="4.2"/>
<circle cx="592.7" cy="437.7" r="4.2"/>
<circle cx="596" cy="455" r="4.5"/>
<circle cx="535" cy="463" r="4.5"/>
</g>
</svg>
<!-- ============ Taskbar ============ -->
<div class="a" style="left:0;top:467px;width:600px;height:13px;background:#d4d0ca;border-top:1px solid #ecebe7"></div>
<svg class="a" style="left:0;top:467px" width="68" height="13" viewBox="0 467 68 13">
<path d="M3 478 C2 475 3 472 5 471 L4 469 L6 470.5 L7 468.5 L8 470.5 L9.5 470 L9 472 C10 474 9 477 7 478 Z" fill="#6a88c0" stroke="#2a3a60" stroke-width=".8"/>
<circle cx="16.5" cy="473.5" r="4.5" fill="#5a9ad8" stroke="#3a6a9a" stroke-width=".6"/><path d="M13 472 Q15 470 17 471.5 Q16 474 14 475 Z M17.5 475 Q19.5 473.5 20.5 474.5 Q19.5 477 17.5 477.5 Z" fill="#60a850"/><path d="M15 476 L17 478.5" stroke="#fff" stroke-width="1"/>
<path d="M25.5 470.5 Q25.5 468 28 468 Q31 468 31 470.5 Q31 472.5 28.5 473.5 V475" fill="none" stroke="#e01818" stroke-width="1.8"/><rect x="27.5" y="476.5" width="2" height="2" fill="#e01818"/>
<rect x="34.5" y="468.5" width="10" height="10" rx="2" fill="#b8b0a0" stroke="#6a6458" stroke-width=".8"/><rect x="36" y="470" width="7" height="6.5" rx="1.5" fill="#141414"/><path d="M37 472 L38.5 473 L37 474" stroke="#ccc" stroke-width=".6" fill="none"/>
<rect x="46.5" y="468.5" width="9" height="9" fill="#2a5ab0" stroke="#b8c4d8" stroke-width="1"/><path d="M47.5 474 L49 474 L50 471 L51.5 476 L52.5 473 L54.5 473" fill="none" stroke="#fff" stroke-width=".8"/>
<rect x="57.5" y="469.5" width="8" height="8.5" rx="1" fill="#d89040" stroke="#8a5a20" stroke-width=".8"/><circle cx="61.5" cy="474" r="2.6" fill="#f6f0e0"/><path d="M61.5 472.5 V474 H63" stroke="#884" stroke-width=".6" fill="none"/>
</svg>
<div class="a" style="left:68px;top:468px;width:2px;height:12px;border-left:1px solid #a8a59e;border-right:1px solid #f4f2ee"></div>
<div class="a task" style="left:71px;top:468px;width:57px"><b class="tfd"></b><span>[var]</span></div>
<div class="a task" style="left:128px;top:468px;width:56px"><b class="tfd"></b><span>[log]</span></div>
<div class="a" style="left:183px;top:468px;width:2px;height:12px;border-left:1px solid #a8a59e;border-right:1px solid #f4f2ee"></div>
<div class="a task" style="left:185px;top:468px;width:57px"><b style="left:3px;top:2px;width:8px;height:8px;border-radius:50%;background:#4a80d0;border:1px solid #2a4a90"></b><span>MyPrMono - M...</span></div>
<div class="a task" style="left:243px;top:468px;width:55px"><b class="tgl"></b><span>[ресторан пре...</span></div>
<div class="a task" style="left:298px;top:468px;width:55px"><b class="tgl"></b><span>[Wine HQ - An...</span></div>
<div class="a task" style="left:353px;top:468px;width:55px"><b style="left:5px;top:2px;width:6px;height:8px;background:#f4f4f4;border:1px solid #aaa;box-shadow:inset 0 0 0 1.5px #fff,inset 0 0 0 3px #d03030"></b><span>[Безымянный...</span></div>
<div class="a task" style="left:409px;top:468px;width:61px"><b style="left:8px;top:2px;width:7px;height:8px;background:#f4f4f4;border:1px solid #aaa;box-shadow:inset 0 0 0 1.5px #fff,inset 0 0 0 3px #d03030"></b><span style="left:19px">Макросы и ди...</span></div>
<div class="a task act" style="left:471px;top:468px;width:58px"><b style="left:3px;top:2px;width:8px;height:8px;background:linear-gradient(135deg,#5a8ad0 40%,#e0e8f4 40%)"></b><span>Solitaire [Толь...</span></div>
<div class="a" style="left:530px;top:468px;width:2px;height:12px;border-left:1px solid #a8a59e;border-right:1px solid #f4f2ee"></div>
<div class="a" style="left:534px;top:470px;width:10px;height:8px;background:#4a6aa8;border:1px solid #6a7a9a"></div>
<div class="a" style="left:541px;top:475px;width:4px;height:4px;background:#f0c020;border-radius:50%"></div>
<div class="a" style="left:549px;top:470px;width:9px;height:8px;background:#7a8a9a;border:1.5px solid #334;border-radius:2px"></div>
<div class="a" style="left:561px;top:468px;font-size:6px;line-height:12px;color:#111;white-space:nowrap;letter-spacing:-0.3px">США</div>
<div class="a" style="left:576px;top:469px;width:9px;height:9px;border-radius:50%;background:radial-gradient(circle at 30% 65%,#e03020 35%,#2a3040 38%)"></div>
<div class="a" style="left:586px;top:468px;font-size:6px;line-height:12px;color:#111;white-space:nowrap;letter-spacing:-0.4px">13:53</div>
</body></html>
